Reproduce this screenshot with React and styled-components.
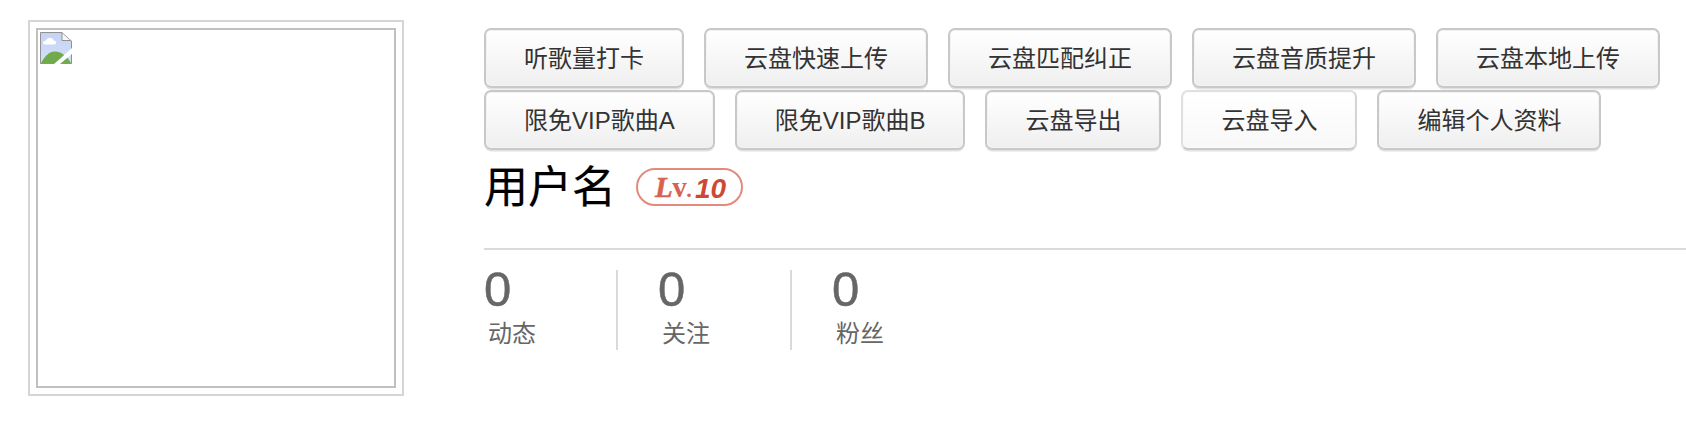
import React from 'react';
import styled, { createGlobalStyle } from 'styled-components';

const GlobalStyle = createGlobalStyle`
  * { box-sizing: border-box; }
  body {
    margin: 0;
    background: #fff;
    color: #333;
    font-family: "Liberation Sans", "Noto Sans CJK SC", sans-serif;
    font-size: 24px;
    overflow: hidden;
  }
`;

const Profile = styled.section`
  display: flex;
  align-items: flex-start;
  gap: 80px;
  height: 434px;
  padding: 20px 0 0 28px;
`;

const AvatarFrame = styled.div`
  flex: none;
  width: 376px;
  height: 376px;
  padding: 6px;
  border: 2px solid #d5d5d5;
`;

const Avatar = styled.div`
  height: 360px;
  padding: 2px;
  border: 2px solid #c0c0c0;
`;

const BrokenImage = styled.svg`
  display: block;
  width: 32px;
  height: 32px;
`;

const Details = styled.div`
  flex: 1;
  min-width: 0;
  padding-top: 8px;
`;

const ButtonRow = styled.div`
  display: flex;
  gap: 20px;
  height: 62px;
`;

const ActionButton = styled.button`
  flex: none;
  height: 60px;
  padding: 2px 38px 0;
  border: 2px solid ${(p) => (p.$active ? '#e0e0e0' : '#c8c8c8')};
  border-bottom-color: #c9c9c9;
  border-right-color: ${(p) => (p.$active ? '#d4d4d4' : '#c8c8c8')};
  border-radius: 7px;
  box-shadow: 0 2px 0 -0.5px #e2e2e2, inset 0 0 0 1px ${(p) => (p.$active ? '#fafafa' : '#f3f3f3')};
  background: linear-gradient(#fff, ${(p) => (p.$active ? '#f8f8f8' : '#efefef')}) padding-box;
  color: #333;
  font: inherit;
  line-height: 54px;
  white-space: nowrap;
`;

const NameBar = styled.header`
  display: flex;
  align-items: flex-start;
  gap: 20px;
  height: 98px;
  padding-top: 12px;
  border-bottom: 2px solid #dadada;
`;

const UserName = styled.h2`
  margin: 0;
  color: #000;
  font-size: 44px;
  font-weight: 400;
  line-height: 48px;
  -webkit-text-stroke: 0.2px #000;
`;

const LevelBadge = styled.span`
  display: flex;
  width: 107px;
  height: 38px;
  margin-top: 4px;
  padding-left: 17px;
  border: 2px solid #e28a7c;
  border-radius: 19px;
  color: #cc4a35;
  line-height: 37px;
`;

const LevelPrefix = styled.span`
  width: 40px;
  color: #d76252;
  font: 700 29px/34px "Liberation Serif", serif;
  letter-spacing: -0.5px;
`;

const LevelCapital = styled.em`
  font-style: italic;
  -webkit-text-stroke: 0.5px #d76252;
`;

const LevelPoint = styled.span`
  font-size: 22px;
`;

const LevelValue = styled.em`
  font-size: 28px;
  font-weight: 700;
`;

const Stats = styled.ul`
  display: flex;
  margin: 20px 0 0;
  padding: 0;
  list-style: none;
`;

const Stat = styled.li`
  width: ${(p) => (p.$first ? 134 : 174)}px;
  height: 80px;
  padding-left: ${(p) => (p.$first ? 0 : 40)}px;
  border-right: 2px solid ${(p) => (p.$last ? 'transparent' : '#dadada')};
  color: #666;
`;

const Count = styled.strong`
  display: block;
  height: 48px;
  font-size: 49px;
  font-weight: 400;
  line-height: 38px;
  -webkit-text-stroke: 0.5px #666;
`;

const StatLabel = styled.span`
  display: block;
  padding-left: 4px;
  line-height: 32px;
`;

const actionRows = [
  ['听歌量打卡', '云盘快速上传', '云盘匹配纠正', '云盘音质提升', '云盘本地上传'],
  ['限免VIP歌曲A', '限免VIP歌曲B', '云盘导出', '云盘导入', '编辑个人资料'],
];

const stats = [
  { label: '动态', count: 0 },
  { label: '关注', count: 0 },
  { label: '粉丝', count: 0 },
];

function BrokenImageIcon() {
  return (
    <BrokenImage viewBox="0 0 32 32" aria-hidden="true">
      <defs>
        <linearGradient id="sky" x1="0" y1="0" x2="0" y2="1">
          <stop offset="0" stopColor="#c3d3f3" />
          <stop offset="1" stopColor="#d3e0f8" />
        </linearGradient>
        <clipPath id="page">
          <path d="M0 0H22L32 9V16L14 32H0Z M32 22V32H20Z" />
        </clipPath>
      </defs>
      <g clipPath="url(#page)">
        <path d="M0 0H22L32 9V32H0Z" fill="url(#sky)" />
        <path d="M1 31C5 24 9 19.5 15 19.5S27 24 31 31Z" fill="#70aa4a" />
        <path d="M5 12.5C2 12.5 2.5 8.5 6 8.5C7 4.5 13 5 13.5 8.5C17 8.5 17 12.5 14 12.5Z" fill="#fff" />
        <path d="M22 0V9H32Z" fill="#f7f7f7" />
        <path d="M0.5 0.5H22L31.5 9V31.5H0.5Z M22 0.5V8.5H31.5" fill="none" stroke="#919191" />
      </g>
    </BrokenImage>
  );
}

export default function App() {
  return (
    <>
      <GlobalStyle />
      <Profile>
        <AvatarFrame>
          <Avatar>
            <BrokenImageIcon />
          </Avatar>
        </AvatarFrame>
        <Details>
          {actionRows.map((row) => (
            <ButtonRow key={row[0]}>
              {row.map((label) => (
                <ActionButton key={label} $active={label === '云盘导入'}>
                  {label}
                </ActionButton>
              ))}
            </ButtonRow>
          ))}
          <NameBar>
            <UserName>用户名</UserName>
            <LevelBadge>
              <LevelPrefix>
                <LevelCapital>L</LevelCapital>v<LevelPoint>.</LevelPoint>
              </LevelPrefix>
              <LevelValue>10</LevelValue>
            </LevelBadge>
          </NameBar>
          <Stats>
            {stats.map(({ label, count }, i) => (
              <Stat key={label} $first={i === 0} $last={i === stats.length - 1}>
                <Count>{count}</Count>
                <StatLabel>{label}</StatLabel>
              </Stat>
            ))}
          </Stats>
        </Details>
      </Profile>
    </>
  );
}
